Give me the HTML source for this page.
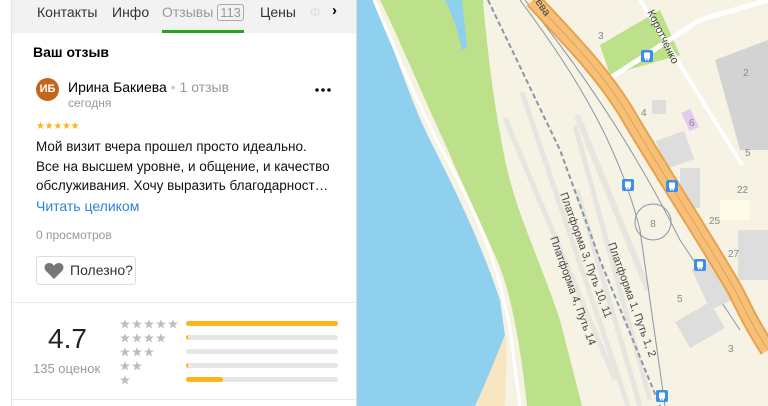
<!DOCTYPE html>
<html><head><meta charset="utf-8">
<style>
*{margin:0;padding:0;box-sizing:border-box}
body{width:768px;height:406px;overflow:hidden;position:relative;font-family:"Liberation Sans","DejaVu Sans",sans-serif;background:#fff}
#map{position:absolute;left:0;top:0}
#panel{position:absolute;left:11px;top:0;width:346px;height:406px;background:#fff;border-left:1px solid #e4e4e4;border-right:1px solid #ddd}
#left{position:absolute;left:0;top:0;width:11px;height:406px;background:#fff}
.hdr{height:33px;background:#f2f2f2;position:relative;font-size:14px;color:#333}
.hdr span{position:absolute;top:4px}
.t{position:absolute}
</style></head><body>
<svg id="map" width="768" height="406" viewBox="0 0 768 406">
<defs><g id="bus"><rect width="12" height="12" rx="2" fill="#3b8eea"/><rect x="3" y="2.5" width="6" height="6" rx="1" fill="#fff"/><rect x="4" y="8.5" width="1.5" height="2" fill="#fff"/><rect x="6.5" y="8.5" width="1.5" height="2" fill="#fff"/></g></defs>
<rect width="768" height="406" fill="#f6f2e4"/>
<path d="M357,0 L374,0 C395,50 410,100 430,140 C455,190 480,240 500,300 L505,335 C495,360 485,385 475,406 L357,406 Z" fill="#8fd0ef"/>
<path d="M505,335 C495,360 485,385 475,406 L505,406 C505,380 508,355 505,335Z" fill="#f6e6c2"/>
<path d="M374,0 C395,50 420,110 450,165 C480,220 500,270 510,330 L520,406" stroke="#fff" stroke-width="3" fill="none"/>
<path d="M380,0 L483,0 C488,60 495,110 505,160 C515,210 540,260 560,320 L582,406 L527,406 C520,340 510,290 497,260 C480,220 460,180 448,150 C420,90 400,40 380,0Z" fill="#bde08a"/>
<path d="M445,0 L462,0 C463,15 466,30 467,48 L462,50 C458,30 452,15 445,0Z" fill="#8fd0ef"/>
<path d="M522,92 L628,406" stroke="#e6e6e0" stroke-width="5"/>
<path d="M505,118 L615,380" stroke="#e6e6e0" stroke-width="5"/>
<path d="M575,125 L650,400" stroke="#e6e6e0" stroke-width="5"/>
<path d="M577,190 L640,406" stroke="#e6e6e0" stroke-width="5"/>
<path d="M577,115 L648,290" stroke="#e6e6e0" stroke-width="6"/>
<path d="M488,0 L560,150 L600,260 L660,406" stroke="#8a96a8" stroke-width="2" stroke-dasharray="5,3" fill="none"/>
<path d="M520,0 C580,80 620,150 640,230 L665,406" stroke="#8a96a8" stroke-width="1" fill="none"/>
<path d="M525,0 C590,80 640,160 680,240 C700,270 720,300 740,330" stroke="#8a96a8" stroke-width="1" fill="none"/>
<circle cx="653" cy="222" r="18" stroke="#8a96a8" fill="none"/>
<text x="653" y="227" font-size="10" fill="#888" text-anchor="middle">8</text>
<path d="M715,60 L768,40 L768,150 L740,150 Z" fill="#d3d3d3"/>
<rect x="652" y="100" width="14" height="14" fill="#ddd"/>
<rect x="660" y="135" width="30" height="30" fill="#ddd" transform="rotate(-20 675 150)"/>
<rect x="680" y="168" width="20" height="40" fill="#ddd"/>
<rect x="720" y="200" width="30" height="20" fill="#fdfbe8"/>
<rect x="700" y="262" width="25" height="45" rx="3" fill="#ddd" transform="rotate(-25 712 285)"/>
<rect x="680" y="310" width="40" height="30" fill="#ddd" transform="rotate(-30 700 325)"/>
<rect x="738" y="230" width="30" height="50" fill="#ddd"/>
<path d="M600,45 L660,10 L680,55 L610,75Z" fill="#bde08a"/>
<path d="M604,82 L700,20 L768,0" stroke="#fff" stroke-width="5" fill="none"/>
<path d="M640,0 L742,165" stroke="#fff" stroke-width="4"/>
<rect x="685" y="110" width="10" height="20" fill="#e2cbee" transform="rotate(-25 690 120)"/>
<path d="M533,0 C570,40 600,70 625,110 C660,170 700,230 735,290 C745,310 752,325 768,350" stroke="#e8a24a" stroke-width="17" fill="none"/>
<path d="M533,0 C570,40 600,70 625,110 C660,170 700,230 735,290 C745,310 752,325 768,350" stroke="#f7c07a" stroke-width="13" fill="none"/>
<path d="M533,0 C570,40 600,70 625,110 C660,170 700,230 735,290 C745,310 752,325 768,350" stroke="#e8a24a" stroke-width="1" fill="none"/>
<use href="#bus" x="641" y="50"/><use href="#bus" x="622" y="179"/><use href="#bus" x="666" y="180"/><use href="#bus" x="694" y="259"/><use href="#bus" x="656" y="390"/>
<g font-size="10" fill="#888"><text x="743" y="76">2</text><text x="641" y="116">4</text><text x="689" y="126">6</text><text x="745" y="156">5</text><text x="737" y="193">22</text><text x="709" y="224">25</text><text x="728" y="257">27</text><text x="677" y="302">5</text><text x="728" y="352">3</text><text x="598" y="39">3</text></g>
<g font-size="11" fill="#444">
<text transform="translate(647,12) rotate(64)">Коротченко</text>
<text transform="translate(535,2) rotate(55)">ева</text>
<text transform="translate(560,194) rotate(70)">Платформа 3, Путь 10, 11</text>
<text transform="translate(550,238) rotate(70)">Платформа 4, Путь 14</text>
<text transform="translate(608,244) rotate(70)">Платформа 1, Путь 1, 2</text>
</g>
</svg>
<div id="left"></div>
<div id="panel">
 <div class="hdr">
  <span style="left:25px">Контакты</span>
  <span style="left:100px">Инфо</span>
  <span style="left:150px;color:#999">Отзывы <span style="position:static;border:1px solid #aaa;border-radius:3px;padding:0 2px;font-size:13px">113</span></span>
  <span style="left:248px">Цены</span>
  <span style="left:298px;color:#ddd">Ф</span>
  <span style="left:320px;top:2px;font-weight:bold;font-size:15px;color:#000">›</span>
  <div style="position:absolute;left:150px;top:30px;width:82px;height:3px;background:#2aa222"></div>
 </div>
 <div class="t" style="left:21px;top:44px;font-size:14px;font-weight:bold;color:#000">Ваш отзыв</div>
 <div class="t" style="left:24px;top:78px;width:23px;height:23px;border-radius:50%;background:#c3651b;color:#fff;font-size:11px;font-weight:bold;text-align:center;line-height:23px">ИБ</div>
 <div class="t" style="left:56px;top:79px;font-size:14px;color:#000">Ирина Бакиева <span style="color:#ccc">•</span> <span style="color:#999">1 отзыв</span></div>
 <div class="t" style="left:56px;top:96px;font-size:12px;color:#999">сегодня</div>
 <svg class="t" style="left:302px;top:87px" width="18" height="6"><circle cx="3" cy="3" r="1.8" fill="#111"/><circle cx="9" cy="3" r="1.8" fill="#111"/><circle cx="15" cy="3" r="1.8" fill="#111"/></svg>
 <div class="t" style="left:24px;top:121px;font-size:10px;color:#fbb41a;letter-spacing:-0.3px">★★★★★</div>
 <div class="t" style="left:24px;top:137px;font-size:13.5px;line-height:19.5px;color:#111;width:325px">Мой визит вчера прошел просто идеально.<br>Все на высшем уровне, и общение, и качество<br>обслуживания. Хочу выразить благодарност…</div>
 <div class="t" style="left:24px;top:198px;font-size:14px;color:#2e83d8">Читать целиком</div>
 <div class="t" style="left:24px;top:228px;font-size:12px;color:#999">0 просмотров</div>
 <div class="t" style="left:24px;top:256px;width:100px;height:29px;border:1px solid #ddd;border-radius:3px;font-size:14px;color:#333;line-height:27px;padding-left:33px">Полезно?
  <svg style="position:absolute;left:7px;top:5px" width="20" height="18" viewBox="0 0 20 18"><path d="M10,17 L2,9 C-1,6 1,1 5,1 C7,1 9,2 10,4 C11,2 13,1 15,1 C19,1 21,6 18,9Z" fill="#777"/></svg>
 </div>
 <div class="t" style="left:0;top:302px;width:345px;height:1px;background:#e8e8e8"></div>
 <div class="t" style="left:36px;top:323px;font-size:28px;color:#222">4.7</div>
 <div class="t" style="left:21px;top:361px;font-size:13px;color:#999">135 оценок</div>
 <svg class="t" style="left:107px;top:318px" width="70" height="70">
  <defs><path id="st" d="M5,0 L6.2,3.5 L10,3.6 L7,5.9 L8.1,9.5 L5,7.4 L1.9,9.5 L3,5.9 L0,3.6 L3.8,3.5Z" fill="#bdbdbd"/></defs>
  <use href="#st" x="1" y="1"/><use href="#st" x="13" y="1"/><use href="#st" x="25" y="1"/><use href="#st" x="37" y="1"/><use href="#st" x="49" y="1"/>
  <use href="#st" x="1" y="15"/><use href="#st" x="13" y="15"/><use href="#st" x="25" y="15"/><use href="#st" x="37" y="15"/>
  <use href="#st" x="1" y="29"/><use href="#st" x="13" y="29"/><use href="#st" x="25" y="29"/>
  <use href="#st" x="1" y="43"/><use href="#st" x="13" y="43"/>
  <use href="#st" x="1" y="57"/>
 </svg>
 <div class="t" style="left:174px;top:321px;width:152px">
  <div style="height:5px;border-radius:3px;background:#fbb41a;margin-bottom:9px"></div>
  <div style="height:5px;border-radius:3px;background:#e6e6e6;margin-bottom:9px;border-left:2px solid #fbb41a"></div>
  <div style="height:5px;border-radius:3px;background:#e6e6e6;margin-bottom:9px"></div>
  <div style="height:5px;border-radius:3px;background:#e6e6e6;margin-bottom:9px;border-left:2px solid #fbb41a"></div>
  <div style="height:5px;border-radius:3px;background:#e6e6e6;position:relative"><div style="width:37px;height:5px;border-radius:3px;background:#fbb41a"></div></div>
 </div>
 <div class="t" style="left:0;top:399px;width:345px;height:1px;background:#e8e8e8"></div>
</div>
</body></html>
